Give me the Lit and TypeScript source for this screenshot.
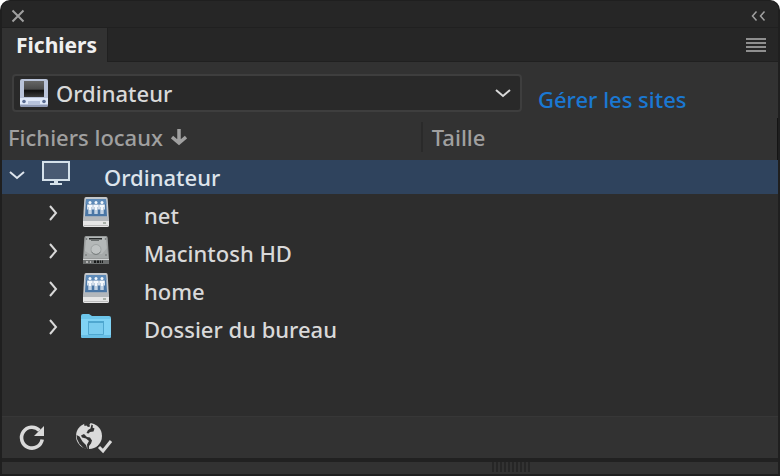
import { LitElement, html, css, svg, nothing, TemplateResult } from "lit";
import { customElement, property, state } from "lit/decorators.js";
import { classMap } from "lit/directives/class-map.js";

type Kind = "computer" | "network" | "disk" | "folder";

const person = (x: number) => svg`
  <circle cx=${x} cy="5.500" r="1.500" fill="#f4f8fc"/>
  <path d=${`M${x - 2.8} 7.500h5.600v5h-1v-2.500h-.3v7h-1.200v-4h-.6v4h-1.200v-7h-.3v2.500h-1z`} fill="#f4f8fc"/>`;

const networkDrive = svg`
  <path d="M5 0h20q1.500 0 1.700 2L28 24v4q0 2-2 2H4q-2 0-2-2v-4L3.300 2Q3.500 0 5 0z" fill="#c3c7cb"/>
  <path d="M5 2h20l1 17.500H4z" fill="#4a76a5"/>
  <path d="M5 2h20l.3 5H4.700z" fill="#5d8ab8"/>
  <path d="M3 19.500h24l1 4.500H2z" fill="#b3b7bb"/>
  <path d="M2 24h26v4q0 2-2 2H4q-2 0-2-2z" fill="#e6e6e6"/>
  <path d="M3 28h24v1H3z" fill="#bdbdbd"/>
  <path d="M22 25.500h3v1h-3z" fill="#6d7d6d"/>
  ${person(9)}${person(15)}${person(21)}`;

const disk = svg`
  <path d="M5 1h20q1.500 0 1.700 2L28 24v4q0 1-1.500 1h-23Q2 29 2 28v-4L3.300 3Q3.500 1 5 1z" fill="#989b9b"/>
  <path d="M5 2h20l1.700 21H3.300z" fill="#b4b8b8"/>
  <path d="M4 16l-.7 7h23.400L26 13l-5 6H9z" fill="#a6aaaa"/>
  <path d="M8 3h13v1.600H8z" fill="#262929"/><path d="M10 5h8v1h-8z" fill="#686d6d"/>
  <circle cx="15" cy="14.500" r="5" fill="#bfc3c3" stroke="#979c9c" stroke-width=".8"/>
  <path d="M10.500 17q4.500 5 9 0" fill="none" stroke="#777c7c"/>
  <g fill="#656a6a"><circle cx="5.500" cy="4" r=".8"/><circle cx="24.500" cy="4" r=".8"/><circle cx="5" cy="20" r=".8"/><circle cx="25" cy="20" r=".8"/></g>
  <path d="M2 24h26v4q0 1-1.500 1h-23Q2 29 2 28z" fill="#6b6e6e"/>
  <path d="M2 24h26v1H2z" fill="#d0d3d3"/>
  <path d="M5 26h2v2H5zM9 26h1v2H9z" fill="#b3b3b3"/>
  <path d="M13 25.500h9V28h-9z" fill="#171919"/>
  <path d="M15.500 25v3M18.500 25v3M20.500 25v3" stroke="#8c8f8f" stroke-width=".6"/>`;

const folder = svg`
  <path d="M0 5q0-2 2-2h6l3 2h17q2 0 2 2v18q0 2-2 2H2q-2 0-2-2z" fill="#6cc5ea"/>
  <path d="M0 8h30v17q0 2-2 2H2q-2 0-2-2z" fill="#80d3f5"/>
  <path d="M0 24h30v1q0 2-2 2H2q-2 0-2-2z" fill="#68bfe6"/>
  <path d="M7.500 10.500h15v13h-15z" fill="#7accef" stroke="#4fa7d0"/>
  <path d="M7 10h16v2H7z" fill="#4fa7d0"/>`;

const computer = svg`
  <path d="M1 3h26v18H1z" fill="#495a72" stroke="#d5e1ea" stroke-width="2"/>
  <path d="M12 22h4v2h4v2H8v-2h4z" fill="#d5e1ea"/>`;

const ICONS: Record<Kind, TemplateResult> = {
  computer: computer,
  network: networkDrive,
  disk: disk,
  folder: folder,
};

interface Entry {
  name: string;
  kind: Kind;
}

const ENTRIES: Entry[] = [
  { name: "net", kind: "network" },
  { name: "Macintosh HD", kind: "disk" },
  { name: "home", kind: "network" },
  { name: "Dossier du bureau", kind: "folder" },
];

@customElement("file-icon")
export class FileIcon extends LitElement {
  @property() kind: Kind = "folder";

  static styles = css`
    :host { display: block; width: 30px; height: 30px; }
    .icon { display: block; width: 30px; height: 30px; }
  `;

  render() {
    return html`<svg class="icon" viewBox="0 0 30 30" aria-hidden="true">${ICONS[this.kind]}</svg>`;
  }
}

@customElement("file-tree")
export class FileTree extends LitElement {
  @state() private open = true;
  @state() private selected = "Ordinateur";

  static styles = css`
    :host { display: block; flex: 1; background: #2d2d2d; }
    .table { width: 100%; border-collapse: collapse; table-layout: fixed; }
    .name-col { width: 54%; }
    .head { background: #323232; }
    .head-cell { height: 42px; padding: 0; text-align: left; font-weight: 500; color: #a0a0a0; }
    .head-cell:last-child { border-right: 1px solid #141414; }
    .head-inner { display: flex; align-items: center; height: 30px; margin: 2px 0 6px; }
    .size { border-left: 2px solid #2a2a2a; padding-left: 9px; }
    button { font: inherit; color: inherit; background: none; border: 0; padding: 0; }
    .sort { display: flex; align-items: center; gap: 8px; padding-left: 6px; }
    .arrow { width: 16px; height: 18px; }
    .cell { padding: 0; }
    .root-cell { padding: 0 0 2px; }
    .line { display: flex; height: 38px; align-items: center; padding-left: 42px; color: #d9d9d9; }
    .root { height: 34px; padding-left: 6px; color: #dde4ec; }
    .selected { background: #2f435d; }
    .toggle { display: flex; justify-content: center; width: 18px; height: 18px; margin-bottom: 4px; }
    .glyph { width: 18px; height: 18px; fill: none; stroke: currentColor; stroke-width: 2; }
    .picture { margin: 0 33px 6px 19px; }
    .root .picture { margin: 0 32px 6px 16px; }
  `;

  private row(name: string, kind: Kind, root: boolean) {
    const expanded = root && this.open;
    const line = { line: true, root, selected: this.selected === name };
    return html`<tr @click=${() => (this.selected = name)}>
      <td class=${root ? "root-cell" : "cell"} colspan="2">
        <div class=${classMap(line)}>
          <button
            class="toggle"
            aria-label=${`Développer ${name}`}
            aria-expanded=${expanded ? "true" : "false"}
            @click=${() => root && (this.open = !this.open)}
          >
            <svg class="glyph" viewBox="0 0 18 18" aria-hidden="true">
              <path d=${expanded ? "M2 6l7 6 7-6" : "M6 2l6 7-6 7"} />
            </svg>
          </button>
          <file-icon class="picture" kind=${kind}></file-icon>
          <span>${name}</span>
        </div>
      </td>
    </tr>`;
  }

  render() {
    return html`<table class="table">
      <colgroup><col class="name-col" /><col /></colgroup>
      <thead class="head">
        <tr>
          <th class="head-cell" scope="col">
            <div class="head-inner">
              <button class="sort">
                Fichiers locaux
                <svg class="arrow" viewBox="0 0 16 18" aria-hidden="true">
                  <path d="M8 1v14M1 9l7 6 7-6" fill="none" stroke="currentColor" stroke-width="3.500" />
                </svg>
              </button>
            </div>
          </th>
          <th class="head-cell" scope="col"><div class="head-inner size">Taille</div></th>
        </tr>
      </thead>
      <tbody>
        ${this.row("Ordinateur", "computer", true)}
        ${this.open ? ENTRIES.map((e) => this.row(e.name, e.kind, false)) : nothing}
      </tbody>
    </table>`;
  }
}

@customElement("app-root")
export class AppRoot extends LitElement {
  static styles = css`
    :host {
      display: flex;
      flex-direction: column;
      box-sizing: border-box;
      min-height: 100vh;
      border: 2px solid #1f1f1f;
      border-top-width: 1px;
      border-radius: 10px 10px 0 0;
      overflow: hidden;
      background: #323232;
      color: #d9d9d9;
      font: 500 22px/30px "Noto Sans", sans-serif;
    }
    button { font: inherit; color: inherit; background: none; border: 0; padding: 0; }
    svg { display: block; }
    .titlebar {
      display: flex;
      justify-content: space-between;
      align-items: center;
      height: 27px;
      padding: 4px 12px 0 8px;
      box-sizing: border-box;
      background: #262626;
      border-bottom: 1px solid #202020;
      color: #a0a0a0;
    }
    .tabs {
      display: flex;
      justify-content: space-between;
      align-items: stretch;
      height: 34px;
      background: #262626;
    }
    .tab { padding: 0 10px 0 14px; background: #323232; color: #f0f0f0; font-size: 21px; font-weight: 700; }
    .menu { flex: 1; display: flex; justify-content: flex-end; align-items: center; padding-right: 12px; color: #8f8f8f; border-bottom: 1px solid #202020; border-left: 1px solid #202020; }
    .sites { display: flex; align-items: flex-start; gap: 16px; padding: 12px 88px 4px 10px; }
    .picker {
      flex: 0 1 510px;
      display: grid;
      grid-template-columns: 28px 1fr 18px;
      align-items: center;
      box-sizing: border-box;
      height: 38px;
      padding: 0 8px 0 6px;
      border: 2px solid #3e3e3e;
      border-radius: 4px;
      background: #292929;
    }
    .device { grid-area: 1 / 1; }
    .caret { grid-area: 1 / 3; pointer-events: none; }
    .select {
      grid-area: 1 / 1 / 2 / 4;
      width: 100%;
      appearance: none;
      border: 0;
      padding: 0 28px 0 36px;
      background: none;
      color: inherit;
      font: inherit;
    }
    .manage { padding-top: 10px; color: #1a78d2; text-decoration: none; white-space: nowrap; }
    .tools { display: flex; align-items: center; gap: 28px; height: 41px; padding-left: 15px; border-top: 1px solid #373737; color: #dadada; }
    .resize { display: flex; justify-content: center; height: 12px; border-top: 4px solid #212121; padding-left: 244px; }
    .grip { width: 40px; height: 10px; background: repeating-linear-gradient(90deg, #262626 0 2px, #323232 2px 4px); }
  `;

  render() {
    return html`
      <header class="titlebar">
        <button aria-label="Fermer">
          <svg width="16" height="16" viewBox="0 0 16 16"><path d="M2.500 2.500l11 11M13.500 2.500l-11 11" stroke="currentColor" stroke-width="2" /></svg>
        </button>
        <button aria-label="Réduire">
          <svg width="16" height="12" viewBox="0 0 16 12"><path d="M6.500 1.500L2.500 6l4 4.500M14.500 1.500l-4 4.500 4 4.500" fill="none" stroke="currentColor" stroke-width="1.500" /></svg>
        </button>
      </header>
      <nav class="tabs">
        <button class="tab">Fichiers</button>
        <div class="menu">
          <button aria-label="Options du panneau">
            <svg width="20" height="14" viewBox="0 0 20 14"><path d="M0 1h20M0 5h20M0 9h20M0 13h20" stroke="currentColor" stroke-width="2" /></svg>
          </button>
        </div>
      </nav>
      <div class="sites">
        <div class="picker">
          <svg class="device" width="28" height="28" viewBox="0 0 28 28" aria-hidden="true">
            <defs>
              <linearGradient id="glass" x2="0" y2="1">
                <stop offset="0" stop-color="#666" /><stop offset=".5" stop-color="#4a4a4a" /><stop offset=".6" stop-color="#101010" /><stop offset="1" stop-color="#3a3a3a" />
              </linearGradient>
            </defs>
            <path d="M2 0h24q2 0 2 2v24q0 2-2 2H2q-2 0-2-2V2q0-2 2-2z" fill="#b9c3d9" />
            <path d="M0 19h28v6H0z" fill="#dfe8f8" />
            <path d="M4 2h20v16H4z" fill="url(#glass)" />
            <path d="M0 26h28q0 2-2 2H2q-2 0-2-2z" fill="#8f9ab5" />
            <path d="M8 22h12v3H8z" fill="#b7c3dc" />
            <circle cx="4" cy="22.500" r="1.800" fill="#5a6c92" /><circle cx="24" cy="22.500" r="1.800" fill="#5a6c92" />
          </svg>
          <select class="select" aria-label="Site">
            <option>Ordinateur</option>
          </select>
          <svg class="caret" width="18" height="18" viewBox="0 0 18 18" aria-hidden="true"><path d="M2 6l7 6 7-6" fill="none" stroke="currentColor" stroke-width="2" /></svg>
        </div>
        <a class="manage" href="#">Gérer les sites</a>
      </div>
      <file-tree></file-tree>
      <footer>
        <div class="tools">
          <button aria-label="Actualiser">
            <svg width="30" height="30" viewBox="0 0 30 30">
              <path d="M22.500 7.500A10.400 10.400 0 1 0 25.200 16.500" fill="none" stroke="currentColor" stroke-width="3.600" />
              <path d="M27 3v10H17z" fill="currentColor" />
            </svg>
          </button>
          <button aria-label="Connecter au serveur distant">
            <svg width="38" height="34" viewBox="0 0 38 34">
              <circle cx="14" cy="15" r="13" fill="currentColor" />
              <g fill="#323232">
                <path d="M9 2.500l3-1.500 4 .5-1.500 2 .5 2-2 .5-1.500-1.500-2 .5z" />
                <path d="M16.500 3.500l1.500 1-.5 2 2 1-1 3-3.500.5-1.500 1.500-2-.5 1.500-3 2.500-1.500z" />
                <path d="M1.500 14l3 1.500 3 5 3.500 3.500 1.500 4.500-4-1.500-4-4-2.500-5z" />
                <path d="M6 14.500l3-1.500 3 3 3 .5 2 3-1 3-2 2.500v3.500h-1.500l-.5-5 2-3.500-3-2.500-4-1z" />
              </g>
              <path d="M22 26l5 5 10-11" fill="none" stroke="#323232" stroke-width="6" />
              <path d="M24 26l4 4 8-10" fill="none" stroke="currentColor" stroke-width="3" />
            </svg>
          </button>
        </div>
        <div class="resize"><div class="grip"></div></div>
      </footer>
    `;
  }
}
